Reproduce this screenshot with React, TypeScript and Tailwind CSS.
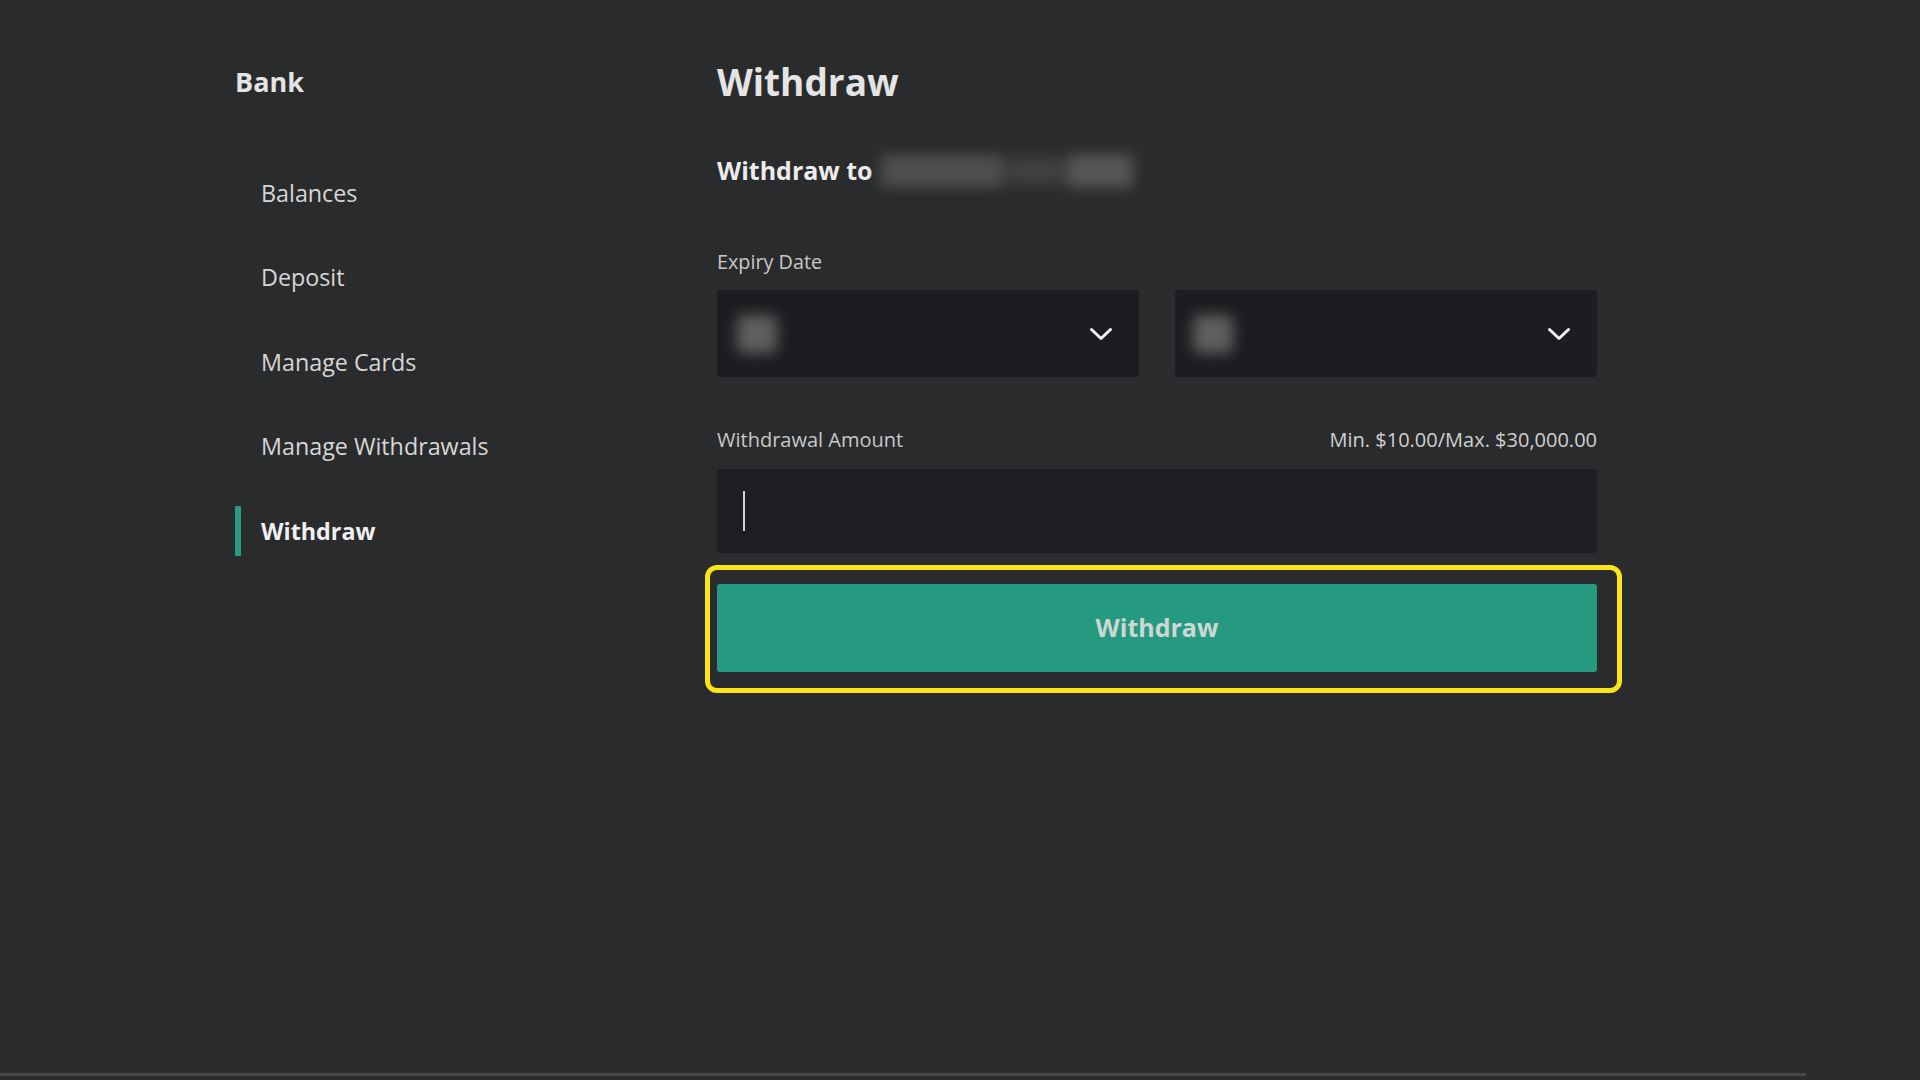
import React from "react";

function Chevron() {
  return (
    <svg width="24" height="14" viewBox="0 0 24 14" fill="none">
      <polyline points="2.5,2.5 12,11.5 21.5,2.5" stroke="#f2f2f2" strokeWidth="3" strokeLinecap="round" strokeLinejoin="round" />
    </svg>
  );
}

function Select({ offset }: { offset: string }) {
  return (
    <div className="flex h-[87px] w-[422px] items-center justify-between rounded-[3px] bg-[#1c1d20] pr-[26px]">
      <div className={`${offset} h-[38px] w-[40px] rounded-[6px] bg-[#5e605f] blur-[7px]`} />
      <Chevron />
    </div>
  );
}

const navItems = ["Balances", "Deposit", "Manage Cards", "Manage Withdrawals", "Withdraw"];

export default function App() {
  return (
    <div
      className="relative flex h-[1080px] w-[1920px] flex-col overflow-hidden bg-[#2a2b2d]"
      style={{ fontFamily: '"Open Sans", "Noto Sans", sans-serif' }}
    >
      <div className="flex flex-1 pl-[235px] pt-[60px]">
        {/* Sidebar */}
        <div className="flex w-[482px] flex-col">
          <div className="flex h-[44px] items-center text-[27px] font-bold text-[#e4e4e4]">Bank</div>
          <div className="mt-[64px] flex flex-col gap-[34.5px]">
            {navItems.map((item) => {
              const active = item === "Withdraw";
              return (
                <div key={item} className="flex h-[50px] items-center gap-[20px]">
                  <div className={`h-[50px] w-[6px] rounded-[1px] ${active ? "bg-[#2a9a80]" : "bg-transparent"}`} />
                  <span
                    className={`text-[23.3px] ${active ? "font-bold text-[#f0f0f0]" : "font-normal text-[#d6d6d6]"}`}
                  >
                    {item}
                  </span>
                </div>
              );
            })}
          </div>
        </div>

        {/* Main */}
        <div className="flex w-[880px] flex-col">
          <div className="flex h-[44px] items-center text-[37px] font-bold text-[#e4e4e4]">Withdraw</div>

          <div className="mt-[47px] flex h-[40px] items-center">
            <span className="text-[25px] font-bold text-[#ececec]">Withdraw to</span>
            <div className="ml-[8px] flex h-[37px] items-center gap-[4px] blur-[7px]">
              <div className="h-[32px] w-[122px] bg-[#4e5050]" />
              <div className="h-[26px] w-[56px] bg-[#404242]" />
              <div className="h-[32px] w-[66px] bg-[#565858]" />
            </div>
          </div>

          <div className="mt-[59px] flex h-[24px] items-center text-[19.8px] text-[#c8c8c8]">Expiry Date</div>

          <div className="mt-[16px] flex justify-between">
            <Select offset="ml-[20px]" />
            <Select offset="ml-[18px]" />
          </div>

          <div className="mt-[51px] flex h-[24px] items-center justify-between text-[20px] text-[#c8c8c8]">
            <span>Withdrawal Amount</span>
            <span className="text-[#d0d0d0]">Min. $10.00/Max. $30,000.00</span>
          </div>

          <div className="mt-[17px] flex h-[84px] items-center rounded-[3px] bg-[#1d1e21] pl-[26px]">
            <div className="h-[40px] w-[2px] bg-[#d4d4d4]" />
          </div>

          <div className="relative mt-[31px]">
            <button className="flex h-[88px] w-full items-center justify-center rounded-[3px] bg-[#269a80] text-[25px] font-bold text-[#cfd7d4]">
              Withdraw
            </button>
            <div className="pointer-events-none absolute left-[-12px] top-[-19px] h-[128px] w-[917px] rounded-[12px] border-[5px] border-[#fbe31a]" />
          </div>
        </div>
      </div>

      <div className="mb-[4px] h-[3px] w-[1806px] bg-[#46474b]" />
    </div>
  );
}
